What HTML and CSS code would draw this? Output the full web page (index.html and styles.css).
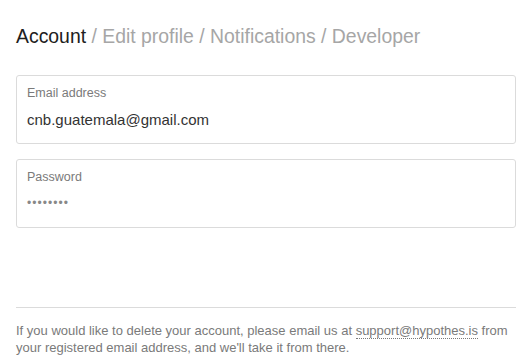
FILE: index.html
```html
<!DOCTYPE html>
<html lang="en">

<head>
    <meta charset="UTF-8">
    <meta name="viewport" content="width=device-width, initial-scale=1.0">
    <title>Account</title>
    <link rel="stylesheet" href="styles.css">
</head>

<body>
    <div class="page">
        <h1 class="tabs">
            <span class="tab active">Account</span>
            <span class="sep">/</span>
            <span class="tab">Edit profile</span>
            <span class="sep">/</span>
            <span class="tab">Notifications</span>
            <span class="sep">/</span>
            <span class="tab">Developer</span>
        </h1>

        <div class="field">
            <label>Email address</label>
            <div class="value">cnb.guatemala@gmail.com</div>
        </div>

        <div class="field">
            <label>Password</label>
            <div class="value dots">&bull;&bull;&bull;&bull;&bull;&bull;&bull;&bull;</div>
        </div>

        <div class="footer">
            If you would like to delete your account, please email us at
            <a href="#">support@hypothes.is</a> from your registered email address, and we'll take it from there.
        </div>
    </div>
</body>

</html>
```

FILE: styles.css
```css
body {
    font-family: 'Liberation Sans', Arial, sans-serif;
    margin: 0;
    padding: 0;
    background-color: #fff;
    color: #202020;
}

.page {
    padding: 22px 16px 0 16px;
}

.tabs {
    font-size: 19.4px;
    font-weight: normal;
    margin: 0 0 25px 0;
    line-height: 28px;
    color: #a6a6a6;
}

.tab.active {
    color: #202020;
}

.field {
    border: 1px solid #dbdbdb;
    border-radius: 3px;
    padding: 10px 10px 15px 10px;
    margin-bottom: 15px;
}

.field label {
    display: block;
    font-size: 12.5px;
    color: #7a7a7a;
    line-height: 14px;
    margin-bottom: 11px;
}

.field .value {
    font-size: 15px;
    line-height: 17px;
    color: #333;
}

.field .value.dots {
    font-size: 12px;
    letter-spacing: 1.05px;
    color: #888;
}

.footer {
    margin-top: 79px;
    border-top: 1px solid #dbdbdb;
    padding-top: 14px;
    font-size: 13px;
    line-height: 17px;
    color: #7a7a7a;
}

.footer a {
    color: #7a7a7a;
    text-decoration: none;
    border-bottom: 1px dotted #7a7a7a;
}
```
